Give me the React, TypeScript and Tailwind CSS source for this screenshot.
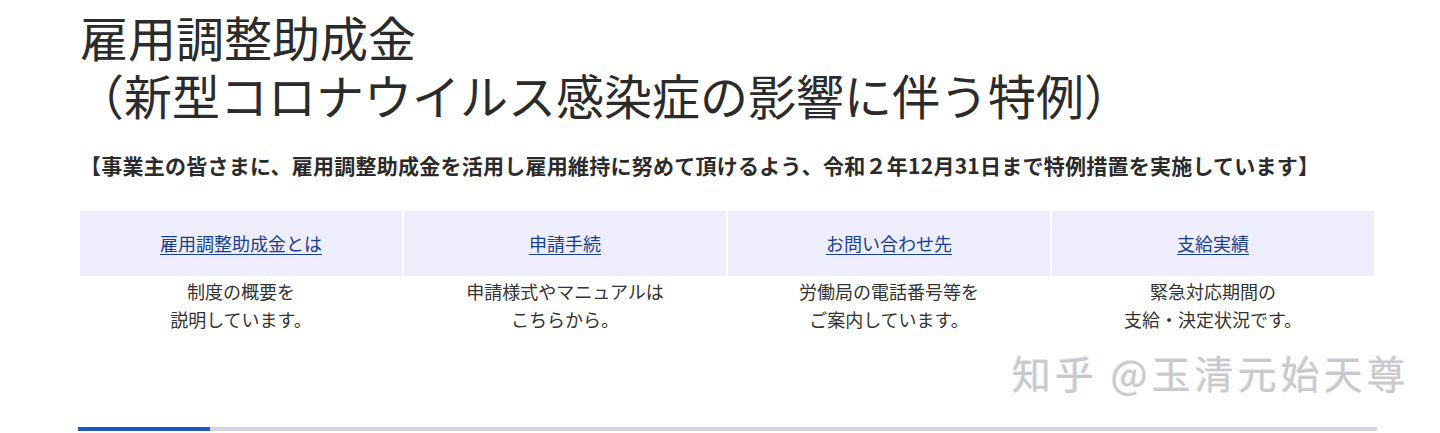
import React from 'react';

// Cards under the banner
const ITEMS = [
    { title: '雇用調整助成金とは', lines: ['制度の概要を', '説明しています。'] },
    { title: '申請手続', lines: ['申請様式やマニュアルは', 'こちらから。'] },
    { title: 'お問い合わせ先', lines: ['労働局の電話番号等を', 'ご案内しています。'] },
    { title: '支給実績', lines: ['緊急対応期間の', '支給・決定状況です。'] },
];

export default function App() {
    return (
        <div
            className="relative w-[1440px] h-[433px] overflow-hidden bg-white text-[#333333]"
            style={{ fontFamily: '"Noto Sans CJK JP", "Noto Sans", sans-serif' }}
        >
            <div className="pl-[80px] pr-[66px] pt-[7px]">
                {/* Title */}
                <h1 className="text-[48px] leading-[58px] font-normal text-[#2b2b2b]">
                    <span className="block">雇用調整助成金</span>
                    <span className="block -ml-[4px]">（新型コロナウイルス感染症の影響に伴う特例）</span>
                </h1>

                {/* Lead */}
                <p className="mt-[27px] text-[21px] leading-[30px] font-bold tracking-[0.25px] text-[#2b2b2b]">
                    【事業主の皆さまに、雇用調整助成金を活用し雇用維持に努めて頂けるよう、令和２年12月31日まで特例措置を実施しています】
                </p>

                {/* Menu */}
                <div className="mt-[31px] grid grid-cols-4 gap-x-[2px] w-[1294px]">
                    {ITEMS.map(item => (
                        <div key={item.title} className="flex flex-col">
                            <div className="h-[65px] bg-[#ededfb] flex items-center justify-center">
                                <a
                                    href="#"
                                    className="text-[18px] text-[#1b3f8f] underline underline-offset-[3px]"
                                >
                                    {item.title}
                                </a>
                            </div>
                            <div className="pt-[1px] text-center text-[18px] leading-[28px] text-[#333333]">
                                {item.lines.map(l => (
                                    <p key={l}>{l}</p>
                                ))}
                            </div>
                        </div>
                    ))}
                </div>
            </div>

            {/* Watermark */}
            <div
                className="absolute left-[1012px] top-[348px] text-[39px] leading-[48px] tracking-[4px] text-[#c9c9cd] [text-shadow:1px_1px_0_#ffffff,-1px_-1px_0_#e6e6e8]"
                style={{ fontFamily: '"Noto Sans CJK SC", "Noto Sans", sans-serif' }}
            >
                知乎 @玉清元始天尊
            </div>

            {/* Progress bar */}
            <div className="absolute left-[78px] top-[427px] w-[1299px] h-[4px] bg-[#d2d3dc] flex">
                <div className="w-[132px] h-full bg-[#2356c0]" />
            </div>
        </div>
    );
}
